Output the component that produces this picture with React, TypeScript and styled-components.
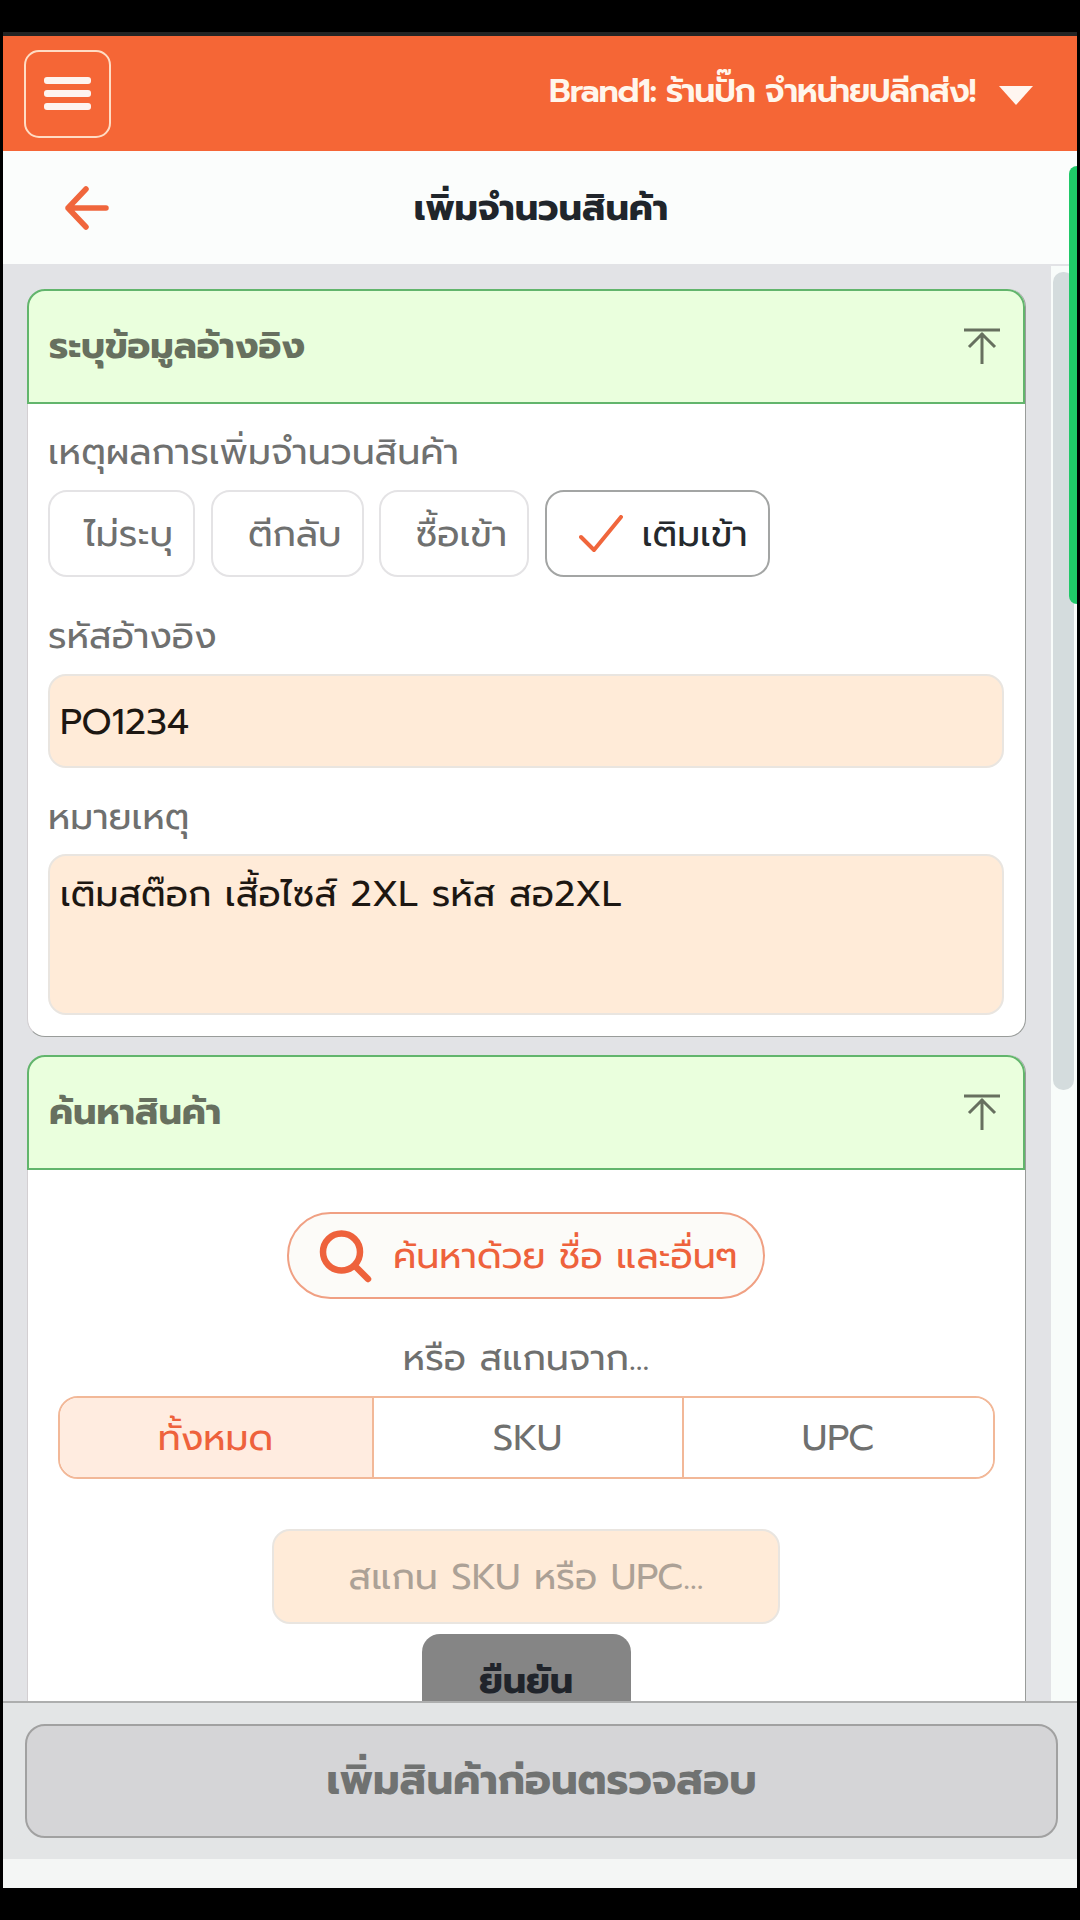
import React from 'react';
import styled, { createGlobalStyle, css } from 'styled-components';

const Global = createGlobalStyle`
  *, *::before, *::after { box-sizing: border-box; }
  body { margin: 0; background: #000; }
  button, input, textarea { font: inherit; margin: 0; }
`;

const Screen = styled.div`
  width: 1080px;
  height: 1920px;
  padding: 32px 3px;
  background: #000;
  overflow: hidden;
  font: 400 36.5px/56px Prompt, "Noto Sans Thai", "Noto Sans", sans-serif;
  color: #6f706f;
`;

const Phone = styled.div`
  position: relative;
  display: flex;
  flex-direction: column;
  height: 1856px;
  border-top: 4px solid #242424;
  background: #f4f6f5;
  overflow: hidden;
`;

const TopBar = styled.header`
  display: flex;
  align-items: center;
  justify-content: space-between;
  height: 115px;
  flex: none;
  padding: 0 44px 0 21px;
  background: #f56636;
`;

const MenuButton = styled.button`
  display: flex;
  flex-direction: column;
  align-items: center;
  justify-content: center;
  gap: 6px;
  width: 87px;
  height: 88px;
  padding: 0 1px 0 0;
  border: 2px solid #ffdcc4;
  border-radius: 15px;
  background: none;
`;

const MenuBar = styled.span`
  width: 47px;
  height: 7px;
  border-radius: 3px;
  background: #fdf4f0;
`;

const Brand = styled.div`
  display: flex;
  align-items: center;
  gap: 24px;
  font-size: 33px;
  font-weight: 600;
  letter-spacing: -1.23px;
  white-space: nowrap;
  color: #fff6ec;
`;

const BrandName = styled.span`
  padding-bottom: 5px;
`;

const Caret = styled.svg`
  width: 34px;
  height: 19px;
  margin-top: 4px;
`;

const TitleBar = styled.div`
  display: grid;
  grid-template-columns: 165px 1fr 160px;
  align-items: center;
  height: 113px;
  flex: none;
  padding-right: 3px;
  background: #fbfdfc;
`;

const BackIcon = styled.svg`
  width: 46px;
  height: 46px;
  margin-left: 61px;
`;

const Title = styled.h1`
  margin: 0;
  font-size: 36.6px;
  font-weight: 700;
  line-height: 56px;
  text-align: center;
  color: #20252b;
`;

const Content = styled.div`
  display: flex;
  height: 1437px;
  flex: none;
  overflow: hidden;
  background: #e2e3e6;
`;

const Column = styled.main`
  display: flex;
  flex-direction: column;
  flex: 1;
  gap: 18px;
  padding: 25px 25px 0 24px;
`;

const ScrollTrack = styled.div`
  width: 26px;
  margin-top: 2px;
  padding: 6px 3px 0 2px;
  background: #f8fcfa;
`;

const ScrollThumb = styled.div`
  height: 818px;
  border-radius: 10px;
  background: #d4dcdd;
`;

const Card = styled.section<{ $height: number }>`
  height: ${p => p.$height}px;
  flex: none;
  border: 1.5px solid #999c9a;
  border-left-color: #d3cfd2;
  border-top: 0;
  border-radius: 18px;
  background: #fff;
`;

const CardHeader = styled.div`
  display: flex;
  align-items: center;
  justify-content: space-between;
  height: 115px;
  margin: 0 0 0 -1px;
  padding: 0 23px 2px 20px;
  border: 2px solid #62b56c;
  border-radius: 18px 18px 0 0;
  background: #eaffdd;
`;

const CardTitle = styled.h2`
  margin: 0;
  font-size: 36.6px;
  font-weight: 700;
  line-height: 56px;
  color: #67705f;
`;

const Form = styled.div`
  display: flex;
  flex-direction: column;
  padding: 20px 20px 0;
`;

const Label = styled.label`
  height: 56px;
  white-space: nowrap;
`;

const Chips = styled.div`
  display: flex;
  gap: 15.5px;
  margin: 10px 0 31px;
`;

const Chip = styled.button<{ $width: number; $checked?: boolean }>`
  display: flex;
  align-items: center;
  justify-content: flex-end;
  gap: 19px;
  width: ${p => p.$width}px;
  height: 87px;
  padding: 0 20px 0 0;
  border: 2px solid ${p => (p.$checked ? '#a3a5a4' : '#e4e3e5')};
  border-radius: 19px;
  background: #fff;
  color: ${p => (p.$checked ? '#25292d' : '#6f706f')};
  white-space: nowrap;
`;

const fieldStyle = css`
  display: block;
  border: 2px solid #e9e5e0;
  border-radius: 18px;
  background: #ffebd8;
  outline: 0;
  font-family: inherit;
`;

const Input = styled.input`
  ${fieldStyle}
  width: 956px;
  height: 94px;
  margin: 10px 0 21px;
  padding: 0 10px;
  color: #1d1712;
`;

const TextArea = styled.textarea`
  ${fieldStyle}
  width: 956px;
  height: 161px;
  margin-top: 9px;
  padding: 10px;
  line-height: 56px;
  resize: none;
  overflow: hidden;
  color: #1d1712;
`;

const SearchPanel = styled.div`
  display: flex;
  flex-direction: column;
  align-items: center;
  padding: 42px 30px 0 29px;
`;

const SearchButton = styled.button`
  display: flex;
  align-items: center;
  gap: 20px;
  width: 478px;
  height: 87px;
  padding: 0 0 0 30px;
  border: 2px solid #f0a083;
  border-radius: 44px;
  background: #fcfbf8;
  color: #ee623c;
  white-space: nowrap;
`;

const OrText = styled.p`
  height: 56px;
  margin: 31px 0 10px;
`;

const Segments = styled.div`
  display: grid;
  grid-template-columns: 314px 310px 1fr;
  width: 937px;
  height: 83px;
  border: 2px solid #f2b898;
  border-radius: 20px;
  overflow: hidden;
`;

const Segment = styled.button<{ $active?: boolean }>`
  padding: 0;
  border: 0;
  border-right: 2px solid #f2b898;
  background: ${p => (p.$active ? '#ffece0' : '#fff')};
  color: ${p => (p.$active ? '#ee623c' : '#6f706f')};
  &:last-child { border-right: 0; }
`;

const ScanInput = styled.input`
  ${fieldStyle}
  width: 508px;
  height: 95px;
  margin: 50px 0 10px;
  padding: 0;
  text-align: center;
  &::placeholder { color: #aca196; opacity: 1; }
`;

const Confirm = styled.button`
  width: 209px;
  height: 94px;
  border: 0;
  border-radius: 18px;
  background: #858585;
  color: #20242b;
  font-weight: 700;
`;

const Footer = styled.footer`
  height: 158px;
  flex: none;
  padding: 21px 19px 0 22px;
  border-top: 2px solid #adaeae;
  background: #e3e5e6;
`;

const Submit = styled.button`
  width: 100%;
  height: 114px;
  padding: 0;
  border: 2px solid #a1a1a1;
  border-radius: 20px;
  background: #d5d5d7;
  color: #707271;
  font-size: 41.7px;
  font-weight: 700;
`;

const PageScroll = styled.div`
  position: absolute;
  top: 130px;
  right: 0;
  width: 8px;
  height: 438px;
  border-radius: 8px 0 0 8px;
  background: #1fc968;
`;

const CollapseIcon = () => (
  <svg width="36" height="36" viewBox="0 0 36 36" fill="none" stroke="#67705f" strokeWidth="3">
    <path d="M0 2H36M18 36V5M5 19L18 6L31 19" />
  </svg>
);

const Panel = ({ title, height, children }: { title: string; height: number; children: React.ReactNode }) => (
  <Card $height={height}>
    <CardHeader>
      <CardTitle>{title}</CardTitle>
      <CollapseIcon />
    </CardHeader>
    {children}
  </Card>
);

export default function App() {
  return (
    <Screen>
      <Global />
      <Phone>
        <TopBar>
          <MenuButton aria-label="menu"><MenuBar /><MenuBar /><MenuBar /></MenuButton>
          <Brand>
            <BrandName>Brand1: ร้านปั๊ก จำหน่ายปลีกส่ง!</BrandName>
            <Caret viewBox="0 0 34 19"><path d="M0 0H34L17 19Z" fill="#fff6f0" /></Caret>
          </Brand>
        </TopBar>
        <TitleBar>
          <BackIcon viewBox="0 0 46 46" fill="none" stroke="#f0663c" strokeWidth="5.5" strokeLinecap="round" strokeLinejoin="round">
            <path d="M22 4L4 23L22 42M4 23H42" />
          </BackIcon>
          <Title>เพิ่มจำนวนสินค้า</Title>
        </TitleBar>
        <Content>
          <Column>
            <Panel title="ระบุข้อมูลอ้างอิง" height={748}>
              <Form>
                <Label>เหตุผลการเพิ่มจำนวนสินค้า</Label>
                <Chips>
                  <Chip $width={147}>ไม่ระบุ</Chip>
                  <Chip $width={153}>ตีกลับ</Chip>
                  <Chip $width={150}>ซื้อเข้า</Chip>
                  <Chip $width={225} $checked>
                    <svg width="44" height="38" viewBox="0 0 44 38" fill="none" stroke="#f0663c" strokeWidth="4" strokeLinecap="round" strokeLinejoin="round">
                      <path d="M2 22L15 35L42 2" />
                    </svg>
                    เติมเข้า
                  </Chip>
                </Chips>
                <Label>รหัสอ้างอิง</Label>
                <Input defaultValue="PO1234" />
                <Label>หมายเหตุ</Label>
                <TextArea spellCheck={false} defaultValue="เติมสต๊อก เสื้อไซส์ 2XL รหัส สอ2XL" />
              </Form>
            </Panel>
            <Panel title="ค้นหาสินค้า" height={720}>
              <SearchPanel>
                <SearchButton>
                  <svg width="54" height="54" viewBox="0 0 54 54" fill="none" stroke="#ee623c">
                    <circle cx="22.5" cy="23" r="18.5" strokeWidth="6.5" />
                    <path d="M36 37L49 50" strokeWidth="6.5" strokeLinecap="round" />
                  </svg>
                  ค้นหาด้วย ชื่อ และอื่นๆ
                </SearchButton>
                <OrText>หรือ สแกนจาก...</OrText>
                <Segments>
                  <Segment $active>ทั้งหมด</Segment>
                  <Segment>SKU</Segment>
                  <Segment>UPC</Segment>
                </Segments>
                <ScanInput placeholder="สแกน SKU หรือ UPC..." />
                <Confirm>ยืนยัน</Confirm>
              </SearchPanel>
            </Panel>
          </Column>
          <ScrollTrack><ScrollThumb /></ScrollTrack>
        </Content>
        <Footer><Submit>เพิ่มสินค้าก่อนตรวจสอบ</Submit></Footer>
        <PageScroll />
      </Phone>
    </Screen>
  );
}
